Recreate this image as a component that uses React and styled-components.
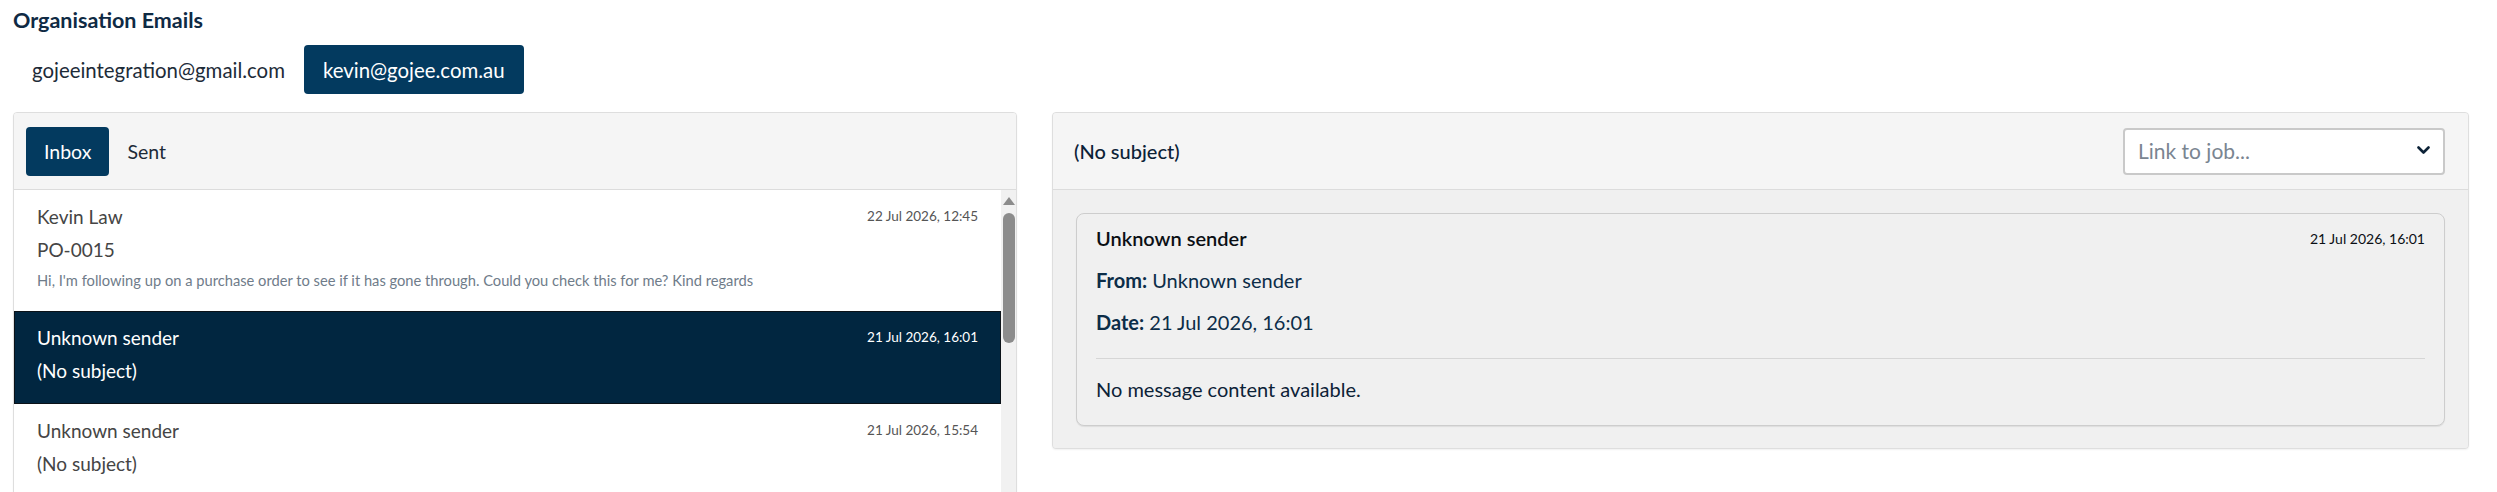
import React from 'react';
import styled, { createGlobalStyle } from 'styled-components';

const GlobalStyle = createGlobalStyle`
  html, body {
    margin: 0;
    padding: 0;
    background: #ffffff;
    overflow: hidden;
  }
  body {
    font-family: Lato, 'Liberation Sans', sans-serif;
    color: #0c2237;
  }
`;

const Page = styled.div`
  padding: 8px 28px 0 13px;
`;

const Title = styled.h2`
  margin: 0;
  font-size: 21.5px;
  line-height: 24px;
  font-weight: 700;
  color: #0f2a44;
`;

const AccountTabs = styled.div`
  display: flex;
  margin-top: 13px;
`;

const AccountTab = styled.button`
  height: 49px;
  padding: 0 19px;
  border: none;
  border-radius: 4px;
  font-family: inherit;
  font-size: 20.4px;
  background: ${(p) => (p.$active ? '#033a5f' : 'transparent')};
  color: ${(p) => (p.$active ? '#ffffff' : '#1d2b38')};
  cursor: pointer;
`;

const Columns = styled.div`
  display: grid;
  grid-template-columns: 1004px 1fr;
  gap: 35px;
  margin-top: 18px;
  align-items: start;
`;

const Panel = styled.section`
  border: 1px solid #dedede;
  border-radius: 4px;
  overflow: hidden;
  background: ${(p) => p.$bg || '#ffffff'};
  box-shadow: 0 1px 2px rgba(0, 0, 0, 0.06);
`;

const ListHeader = styled.div`
  display: flex;
  padding: 14px 12px 13px;
  background: #f5f5f5;
  border-bottom: 1px solid #dcdcdc;
`;

const FolderTab = styled.button`
  height: 49px;
  padding: 0 18px;
  border: none;
  border-radius: 4px;
  font-family: inherit;
  font-size: 19.5px;
  background: ${(p) => (p.$active ? '#033a5f' : 'transparent')};
  color: ${(p) => (p.$active ? '#ffffff' : '#1d2b38')};
`;

const ListArea = styled.div`
  display: flex;
  height: 320px;
`;

const Items = styled.div`
  flex: 1;
  overflow: hidden;
`;

const ScrollTrack = styled.div`
  display: flex;
  flex-direction: column;
  align-items: center;
  width: 15px;
  background: #f1f1f1;
`;

const ScrollArrow = styled.div`
  margin-top: 7px;
  width: 0;
  height: 0;
  border-left: 6px solid transparent;
  border-right: 6px solid transparent;
  border-bottom: 8px solid #8c8c8c;
`;

const ScrollThumb = styled.div`
  margin-top: 8px;
  width: 12px;
  height: 130px;
  border-radius: 6px;
  background: #8c8c8c;
`;

const Item = styled.div`
  padding: 13px 22px 20px 22px;
  border: 1px solid ${(p) => (p.$selected ? '#0b1218' : 'transparent')};
  background: ${(p) => (p.$selected ? '#012640' : '#ffffff')};
  color: ${(p) => (p.$selected ? '#ffffff' : '#454545')};
`;

const ItemTop = styled.div`
  display: flex;
  justify-content: space-between;
  align-items: center;
  height: 24px;
`;

const Sender = styled.span`
  font-size: 19px;
`;

const ItemDate = styled.span`
  font-size: 13.5px;
  color: ${(p) => (p.$selected ? '#ffffff' : '#555555')};
`;

const Subject = styled.div`
  margin-top: 10px;
  font-size: 19px;
  line-height: 24px;
`;

const Preview = styled.div`
  margin-top: 8px;
  font-size: 14.7px;
  line-height: 20px;
  color: #6f7c8a;
  white-space: nowrap;
  overflow: hidden;
  text-overflow: ellipsis;
`;

const DetailHeader = styled.div`
  display: flex;
  justify-content: space-between;
  align-items: center;
  height: 76px;
  padding: 0 23px 0 21px;
  background: #f5f5f5;
  border-bottom: 1px solid #dcdcdc;
`;

const DetailTitle = styled.div`
  font-size: 20px;
  font-weight: 500;
  color: #0c2237;
`;

const Select = styled.div`
  display: flex;
  align-items: center;
  justify-content: space-between;
  box-sizing: border-box;
  width: 322px;
  height: 47px;
  padding: 0 13px 2px 13px;
  background: #ffffff;
  border: 2px solid #c9c9c9;
  border-radius: 4px;
  font-size: 21px;
  color: #7a8591;
`;

const DetailBody = styled.div`
  padding: 23px 23px 22px;
  background: #f0f0f0;
`;

const Card = styled.article`
  padding: 10px 19px 22px;
  border: 1px solid #cdcdcd;
  border-radius: 8px;
  background: #f0f0f0;
  box-shadow: 0 1px 1px rgba(0, 0, 0, 0.08);
`;

const CardTop = styled.div`
  display: flex;
  justify-content: space-between;
  align-items: center;
  height: 28px;
`;

const CardSender = styled.span`
  font-size: 20px;
  font-weight: 600;
  color: #0b0f14;
`;

const CardDate = styled.span`
  font-size: 14px;
  color: #0b0f14;
`;

const Meta = styled.p`
  margin: 14px 0 0;
  font-size: 20px;
  line-height: 28px;
  color: #0c2d48;

  strong {
    font-weight: 700;
  }
`;

const Divider = styled.hr`
  margin: 22px 0 0;
  border: none;
  border-top: 1px solid #d6d6d6;
`;

const BodyText = styled.p`
  margin: 16px 0 0;
  font-size: 20px;
  line-height: 28px;
  color: #0c2237;
`;

const Chevron = () => (
  <svg width="13" height="9" viewBox="0 0 13 9" fill="none">
    <path d="M1.5 1.5L6.5 6.5L11.5 1.5" stroke="#0c2237" strokeWidth="2.6" strokeLinecap="round" strokeLinejoin="round" />
  </svg>
);

const emails = [
  {
    sender: 'Kevin Law',
    date: '22 Jul 2026, 12:45',
    subject: 'PO-0015',
    preview: "Hi, I'm following up on a purchase order to see if it has gone through. Could you check this for me? Kind regards",
  },
  { sender: 'Unknown sender', date: '21 Jul 2026, 16:01', subject: '(No subject)', selected: true },
  { sender: 'Unknown sender', date: '21 Jul 2026, 15:54', subject: '(No subject)' },
];

export default function App() {
  return (
    <Page>
      <GlobalStyle />
      <Title>Organisation Emails</Title>
      <AccountTabs>
        <AccountTab>gojeeintegration@gmail.com</AccountTab>
        <AccountTab $active>kevin@gojee.com.au</AccountTab>
      </AccountTabs>
      <Columns>
        <Panel>
          <ListHeader>
            <FolderTab $active>Inbox</FolderTab>
            <FolderTab>Sent</FolderTab>
          </ListHeader>
          <ListArea>
            <Items>
              {emails.map((e, i) => (
                <Item key={i} $selected={e.selected}>
                  <ItemTop>
                    <Sender>{e.sender}</Sender>
                    <ItemDate $selected={e.selected}>{e.date}</ItemDate>
                  </ItemTop>
                  <Subject>{e.subject}</Subject>
                  {e.preview && <Preview>{e.preview}</Preview>}
                </Item>
              ))}
            </Items>
            <ScrollTrack>
              <ScrollArrow />
              <ScrollThumb />
            </ScrollTrack>
          </ListArea>
        </Panel>
        <Panel $bg="#f0f0f0">
          <DetailHeader>
            <DetailTitle>(No subject)</DetailTitle>
            <Select>
              <span>Link to job...</span>
              <Chevron />
            </Select>
          </DetailHeader>
          <DetailBody>
            <Card>
              <CardTop>
                <CardSender>Unknown sender</CardSender>
                <CardDate>21 Jul 2026, 16:01</CardDate>
              </CardTop>
              <Meta>
                <strong>From:</strong> Unknown sender
              </Meta>
              <Meta>
                <strong>Date:</strong> 21 Jul 2026, 16:01
              </Meta>
              <Divider />
              <BodyText>No message content available.</BodyText>
            </Card>
          </DetailBody>
        </Panel>
      </Columns>
    </Page>
  );
}
